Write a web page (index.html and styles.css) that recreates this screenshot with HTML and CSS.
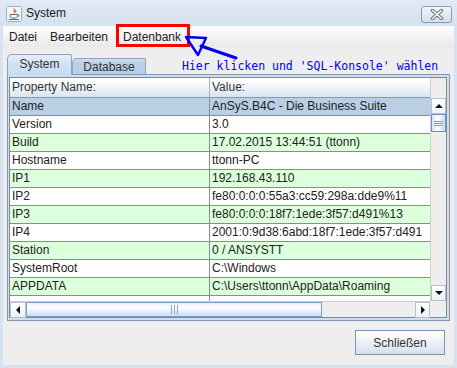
FILE: index.html
```html
<!DOCTYPE html>
<html>
<head>
<meta charset="utf-8">
<title>System</title>
<link rel="stylesheet" href="styles.css">
</head>
<body>
<div class="window">
  <div class="titlebar">
    <svg class="appicon" width="16" height="16" viewBox="0 0 16 16">
      <rect x="0.5" y="0.5" width="15" height="15" rx="1" fill="#f3f6fa" stroke="#9fb0c4"/>
      <path d="M8.5 2.5c-2 1.5 1.5 2.5-0.5 4.5M10 4c-1 1 0.5 1.5-0.5 2.5" fill="none" stroke="#e2761b" stroke-width="1.3"/>
      <path d="M4 8.5h7.5v1.5c0 1.5-1.6 2.2-3.7 2.2S4 11.5 4 10z" fill="none" stroke="#4f6f99" stroke-width="1"/>
      <path d="M11.5 9h1.2c0.9 0 0.9 1.5-0.2 1.6" fill="none" stroke="#4f6f99" stroke-width="0.9"/>
      <path d="M3 13.5h10" stroke="#4f6f99" stroke-width="1"/>
    </svg>
    <span class="title">System</span>
    <div class="closebtn">
      <svg width="14" height="11" viewBox="0 0 14 11">
        <path d="M2.5 1.5l9 8M11.5 1.5l-9 8" stroke="#5d6b7c" stroke-width="3.4" stroke-linecap="round"/>
        <path d="M2.5 1.5l9 8M11.5 1.5l-9 8" stroke="#ffffff" stroke-width="1.6" stroke-linecap="round"/>
      </svg>
    </div>
  </div>
  <div class="client">
    <div class="menubar">
      <span class="menu m1">Datei</span>
      <span class="menu m2">Bearbeiten</span>
      <span class="menu m3">Datenbank</span>
    </div>
    <div class="tabarea">
      <div class="tabrow">
        <div class="tab sel">System</div>
        <div class="tab">Database</div>
        <div class="hint">Hier klicken und 'SQL-Konsole' wählen</div>
      </div>
      <div class="panel">
        <div class="scrollpane">
          <div class="thead">
            <div class="th c1">Property Name:</div>
            <div class="th c2">Value:</div>
          </div>
          <div class="corner top"></div>
          <div class="tbody">
            <div class="row selrow"><div class="cell c1">Name</div><div class="cell c2">AnSyS.B4C - Die Business Suite</div></div>
            <div class="row"><div class="cell c1">Version</div><div class="cell c2">3.0</div></div>
            <div class="row green"><div class="cell c1">Build</div><div class="cell c2">17.02.2015 13:44:51 (ttonn)</div></div>
            <div class="row"><div class="cell c1">Hostname</div><div class="cell c2">ttonn-PC</div></div>
            <div class="row green"><div class="cell c1">IP1</div><div class="cell c2">192.168.43.110</div></div>
            <div class="row"><div class="cell c1">IP2</div><div class="cell c2">fe80:0:0:0:55a3:cc59:298a:dde9%11</div></div>
            <div class="row green"><div class="cell c1">IP3</div><div class="cell c2">fe80:0:0:0:18f7:1ede:3f57:d491%13</div></div>
            <div class="row"><div class="cell c1">IP4</div><div class="cell c2">2001:0:9d38:6abd:18f7:1ede:3f57:d491</div></div>
            <div class="row green"><div class="cell c1">Station</div><div class="cell c2">0 / ANSYSTT</div></div>
            <div class="row"><div class="cell c1">SystemRoot</div><div class="cell c2">C:\Windows</div></div>
            <div class="row green"><div class="cell c1">APPDATA</div><div class="cell c2">C:\Users\ttonn\AppData\Roaming</div></div>
            <div class="row"><div class="cell c1">&nbsp;</div><div class="cell c2">&nbsp;</div></div>
          </div>
          <div class="vscroll">
            <div class="sbtn"><span class="tri up"></span></div>
            <div class="vthumb"><span class="grip"></span><span class="grip"></span><span class="grip"></span></div>
            <div class="strack"></div>
            <div class="sbtn"><span class="tri down"></span></div>
          </div>
          <div class="hscroll">
            <div class="sbtn hb"><span class="tri left"></span></div>
            <div class="hthumb"><span class="vgrip"></span><span class="vgrip"></span><span class="vgrip"></span></div>
            <div class="strack"></div>
            <div class="sbtn hb right"><span class="tri rightt"></span></div>
          </div>
          <div class="corner"></div>
        </div>
      </div>
    </div>
    <div class="footer">
      <button class="btn">Schließen</button>
    </div>
  </div>
  <svg class="annot" width="457" height="368" viewBox="0 0 457 368">
    <rect x="117.5" y="25.5" width="71" height="20" fill="none" stroke="#ff0000" stroke-width="3"/>
    <path d="M186 37 L206 38 L198 55 Z" fill="none" stroke="#0000f0" stroke-width="2.4" stroke-linejoin="round"/>
    <path d="M201 46 L236 58" fill="none" stroke="#0000f0" stroke-width="3" stroke-linecap="round"/>
  </svg>
</div>
</body>
</html>
```
FILE: styles.css
```css
* { box-sizing: border-box; margin: 0; padding: 0; }
html, body { width: 457px; height: 368px; overflow: hidden; }
body {
  font-family: "Liberation Sans", Arial, sans-serif;
  font-size: 12px;
  color: #333333;
  background: #d8e3f0;
}
.window {
  position: relative;
  width: 457px;
  height: 368px;
  display: flex;
  flex-direction: column;
  background: #d7e3f0;
}
.titlebar {
  height: 26px;
  flex: none;
  display: flex;
  align-items: center;
  padding-left: 6px;
  background: linear-gradient(#e1eaf5, #d5e1ee);
}
.appicon { margin-right: 4px; margin-top: 1px; }
.title { font-size: 12px; color: #1a1a1a; }
.closebtn {
  margin-left: auto;
  margin-right: 5px;
  align-self: flex-start;
  margin-top: 6px;
  width: 31px;
  height: 17px;
  border: 1px solid #8c9bae;
  border-radius: 3px;
  background: linear-gradient(#f2f5f9, #d6dee8);
  display: flex;
  align-items: center;
  justify-content: center;
}
.client {
  flex: 1;
  margin: 0 3px 3px 3px;
  background: #eeeeee;
  display: flex;
  flex-direction: column;
}
.menubar {
  height: 21px;
  flex: none;
  display: flex;
  align-items: center;
  background: linear-gradient(#ffffff, #e8e8e8);
}
.menu { padding-left: 6px; color: #222; }
.m1 { width: 41px; }
.m2 { width: 73px; }
.m3 { width: 72px; }
.tabarea { padding: 6px 4px 0 4px; flex: none; }
.tabrow {
  height: 21px;
  display: flex;
  align-items: flex-end;
}
.tab {
  width: 74px;
  height: 16px;
  border: 1px solid #8fa5bf;
  border-bottom: 0;
  border-radius: 5px 2px 0 0;
  background: linear-gradient(#cfe0f1 0, #b8cfe5 30%, #b8cfe5 100%);
  display: flex;
  align-items: center;
  justify-content: center;
  color: #333;
  padding-top: 1px;
}
.tab.sel {
  width: 65px;
  height: 21px;
  margin-bottom: -1px;
  position: relative;
  z-index: 1;
  background: linear-gradient(#e6eff9, #cfe0f2 50%, #c8dcf1);
  padding-top: 0;
  padding-bottom: 2px;
}
.hint {
  align-self: flex-end;
  margin-left: 36px;
  margin-bottom: 1px;
  line-height: 14px;
  font-family: "DejaVu Sans Mono", "Liberation Mono", monospace;
  font-size: 11.5px;
  color: #0000ee;
  white-space: nowrap;
}
.panel {
  height: 247px;
  border: 1px solid #8197b0;
  background: #cfdff0;
  padding: 2px 2px 2px 1px;
}
.scrollpane {
  width: 438px;
  height: 241px;
  border: 1px solid #7a8a99;
  display: grid;
  grid-template-columns: 420px 16px;
  grid-template-rows: 20px 203px 16px;
  background: #eeeeee;
}
.thead {
  display: flex;
  background: linear-gradient(#ffffff, #f3f7fb 40%, #d9e4ef);
  border-bottom: 1px solid #8a9aab;
}
.th { line-height: 19px; padding-left: 2px; color: #333; white-space: nowrap; }
.th.c1 { width: 200px; border-right: 1px solid #a9b7c6; }
.th.c2 { flex: 1; }
.corner { background: #eeeeee; }
.corner.top { border-left: 1px solid #c5ced8; }
.tbody { overflow: hidden; background: #ffffff; }
.row { display: flex; height: 18px; border-bottom: 1px solid #7f8fa1; background: #ffffff; }
.row.green { background: #dcffdc; }
.row.selrow { background: #b8cfe5; }
.cell { line-height: 17px; padding-left: 2px; white-space: nowrap; overflow: hidden; color: #222; }
.cell.c1 { width: 200px; border-right: 1px solid #7f8fa1; }
.cell.c2 { width: 220px; }
.vscroll {
  display: flex;
  flex-direction: column;
  background: #eeeeee;
  border-left: 1px solid #c9d0d8;
}
.sbtn {
  height: 16px;
  flex: none;
  display: flex;
  align-items: center;
  justify-content: center;
  background: linear-gradient(#ffffff, #eef1f5);
  border: 1px solid #b7c0cb;
}
.hb { width: 16px; height: 16px; }
.hb.right { width: 15px; }
.strack { flex: 1; background: #eeeeee; }
.vthumb {
  height: 18px;
  flex: none;
  border: 1px solid #6f8fc8;
  background: linear-gradient(to right, #d6e4f4, #ffffff 45%, #c6dbf1);
  display: flex;
  flex-direction: column;
  align-items: center;
  justify-content: center;
  gap: 1px;
}
.grip { width: 9px; height: 1px; background: #7f9dcf; }
.hscroll {
  display: flex;
  background: #eeeeee;
  border-top: 1px solid #c9d0d8;
}
.hthumb {
  width: 296px;
  flex: none;
  border: 1px solid #7c9bcf;
  background: linear-gradient(#e7eff8, #ffffff 35%, #c8dcf1);
  display: flex;
  align-items: center;
  justify-content: center;
  gap: 2px;
}
.vgrip { width: 1px; height: 9px; background: #8aa5d2; }
.tri { width: 0; height: 0; display: block; }
.tri.up { border-left: 4px solid transparent; border-right: 4px solid transparent; border-bottom: 4px solid #111; }
.tri.down { border-left: 4px solid transparent; border-right: 4px solid transparent; border-top: 4px solid #111; }
.tri.left { border-top: 4px solid transparent; border-bottom: 4px solid transparent; border-right: 4px solid #111; }
.tri.rightt { border-top: 4px solid transparent; border-bottom: 4px solid transparent; border-left: 4px solid #111; }
.footer {
  flex: 1;
  display: flex;
  justify-content: flex-end;
  align-items: flex-start;
  padding: 9px 9px 0 0;
}
.btn {
  width: 90px;
  height: 25px;
  border: 1px solid #7f93ad;
  background: linear-gradient(#ffffff, #f0f4f8 40%, #d5e0ec);
  font-family: "Liberation Sans", Arial, sans-serif;
  font-size: 12px;
  color: #333;
}
.annot { position: absolute; left: 0; top: 0; pointer-events: none; }
```
